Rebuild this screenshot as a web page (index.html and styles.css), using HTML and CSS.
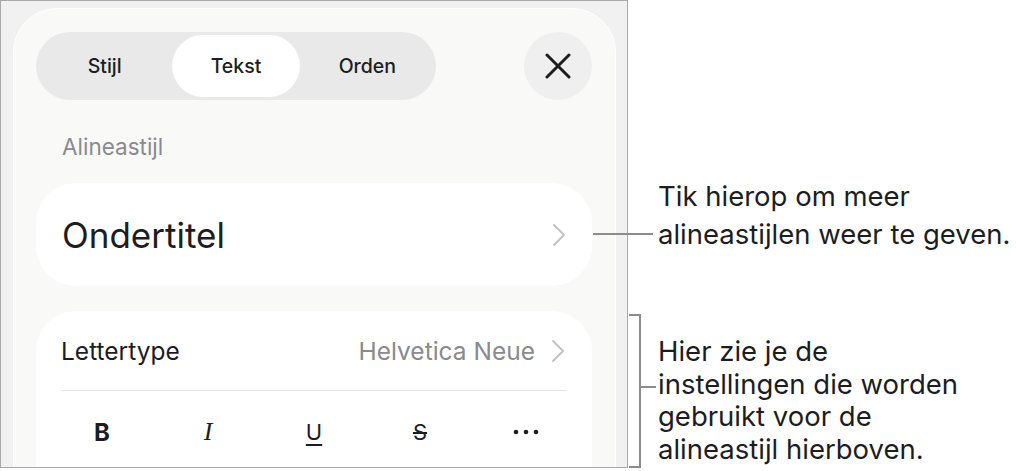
FILE: index.html
```html
<!DOCTYPE html>
<html lang="nl">
<head>
  <meta charset="UTF-8">
  <meta name="viewport" content="width=device-width, initial-scale=1.0">
  <title>Alineastijl</title>
  <link rel="stylesheet" href="styles.css">
</head>
<body>
  <section class="page">
    <div class="device">
      <div class="sheet">
        <div class="topBar">
          <div class="tabs">
            <span class="tab">Stijl</span>
            <span class="tab active">Tekst</span>
            <span class="tab">Orden</span>
          </div>
          <button type="button" class="close">
            <svg width="26" height="26" viewBox="0 0 26 26">
              <path d="M2 2 L24 24 M24 2 L2 24" stroke="#1d1d1f" stroke-width="3" stroke-linecap="round"/>
            </svg>
          </button>
        </div>

        <div class="label">Alineastijl</div>

        <div class="card styleRow">
          <span class="styleName">Ondertitel</span>
          <svg class="chevron" width="14" height="24" viewBox="0 0 14 24">
            <polyline points="2,2 12,12 2,22" fill="none" stroke="#c2c2c4" stroke-width="2" stroke-linecap="round" stroke-linejoin="round"/>
          </svg>
        </div>

        <div class="card fontCard">
          <div class="fontRow">
            <span>Lettertype</span>
            <span class="fontValue">Helvetica Neue
              <svg class="chevron" width="14" height="24" viewBox="0 0 14 24">
                <polyline points="2,2 12,12 2,22" fill="none" stroke="#c2c2c4" stroke-width="2" stroke-linecap="round" stroke-linejoin="round"/>
              </svg>
            </span>
          </div>
          <div class="formatRow">
            <span class="fmt bold">B</span>
            <span class="fmt italic">I</span>
            <span class="fmt under">U</span>
            <span class="fmt strike">S</span>
            <span class="fmt more">
              <svg width="26" height="6" viewBox="0 0 26 6">
                <circle cx="3" cy="3" r="2.3" fill="#1d1d1f"/>
                <circle cx="13" cy="3" r="2.3" fill="#1d1d1f"/>
                <circle cx="23" cy="3" r="2.3" fill="#1d1d1f"/>
              </svg>
            </span>
          </div>
        </div>
      </div>
    </div>

    <div class="notes">
      <p class="note noteStyle">Tik hierop om meer<br>alineastijlen weer te geven.</p>
      <p class="note noteSettings">Hier zie je de<br>instellingen die worden<br>gebruikt voor de<br>alineastijl hierboven.</p>
    </div>
  </section>
</body>
</html>
```

FILE: styles.css
```css
body{
  margin: 0;
  background: #fff;
  font-family: Inter, "Noto Sans", sans-serif;
  color: #1d1d1f;
}

.page{
  display: flex;
  align-items: flex-start;
}

.device{
  width: 603px;
  height: 459px;
  border: 1px solid #a9a9a9;
  background: #f1f1f1;
  padding: 7px 11px 0 12px;
  overflow: hidden;
  flex-shrink: 0;
}

.sheet{
  height: 560px;
  background: #f9f9f8;
  border: 1px solid #fff;
  border-radius: 44px 44px 0 0;
  padding: 23px 23px 0 22px;
}

.topBar{
  display: flex;
  justify-content: space-between;
  align-items: center;
}

.tabs{
  display: grid;
  grid-template-columns: 1fr 1fr 1fr;
  width: 394px;
  height: 62px;
  padding: 3px;
  background: #e9e9e9;
  border-radius: 34px;
}
.tab{
  display: flex;
  align-items: center;
  justify-content: center;
  font-size: 19.5px;
  font-weight: 500;
  border-radius: 31px;
}
.tab.active{
  background: #fff;
  margin: 0 2px;
}

.close{
  width: 68px;
  height: 68px;
  border: none;
  border-radius: 50%;
  background: #efefef;
  display: flex;
  align-items: center;
  justify-content: center;
  padding: 0;
}

.label{
  margin: 34px 0 0 26px;
  font-size: 22.5px;
  line-height: 26px;
  color: #8a8a8e;
}

.card{
  background: #fff;
  border-radius: 40px;
}

.styleRow{
  margin-top: 23px;
  height: 103px;
  display: flex;
  align-items: center;
  justify-content: space-between;
  padding: 0 26px;
}
.styleName{
  font-size: 35px;
}

.fontCard{
  margin-top: 25px;
  height: 200px;
  padding: 0 25px;
}
.fontRow{
  height: 79px;
  display: flex;
  align-items: center;
  justify-content: space-between;
  border-bottom: 1px solid #e3e3e3;
  font-size: 24.5px;
}
.fontValue{
  display: flex;
  align-items: center;
  gap: 16px;
  color: #8a8a8e;
  margin-right: 2px;
}

.formatRow{
  height: 82px;
  display: flex;
  align-items: center;
  justify-content: space-between;
}
.fmt{
  width: 82px;
  text-align: center;
  font-size: 22px;
}
.bold{
  font-weight: 700;
  font-size: 24px;
}
.italic{
  font-family: "Liberation Serif", serif;
  font-style: italic;
  font-size: 26px;
}
.under{
  text-decoration: underline;
  text-decoration-thickness: 2px;
  text-underline-offset: 4px;
}
.strike{
  text-decoration: line-through;
  text-decoration-thickness: 2px;
}
.more{
  display: flex;
  justify-content: center;
}

.notes{
  margin-left: 30px;
}
.note{
  position: relative;
  margin: 0;
  font-size: 27.5px;
  line-height: 32.5px;
  color: #1d1d1f;
  white-space: nowrap;
}
.noteStyle{
  margin-top: 177px;
  line-height: 38px;
}
.noteStyle::before{
  content: "";
  position: absolute;
  left: -65px;
  top: 56px;
  width: 60px;
  height: 2px;
  background: #8c8c8c;
}
.noteSettings{
  margin-top: 82px;
}
.noteSettings::before{
  content: "";
  position: absolute;
  left: -29px;
  top: -21px;
  width: 10px;
  height: 150px;
  border: 2px solid #8c8c8c;
  border-left: none;
}
.noteSettings::after{
  content: "";
  position: absolute;
  left: -17px;
  top: 51px;
  width: 15px;
  height: 2px;
  background: #8c8c8c;
}
```
